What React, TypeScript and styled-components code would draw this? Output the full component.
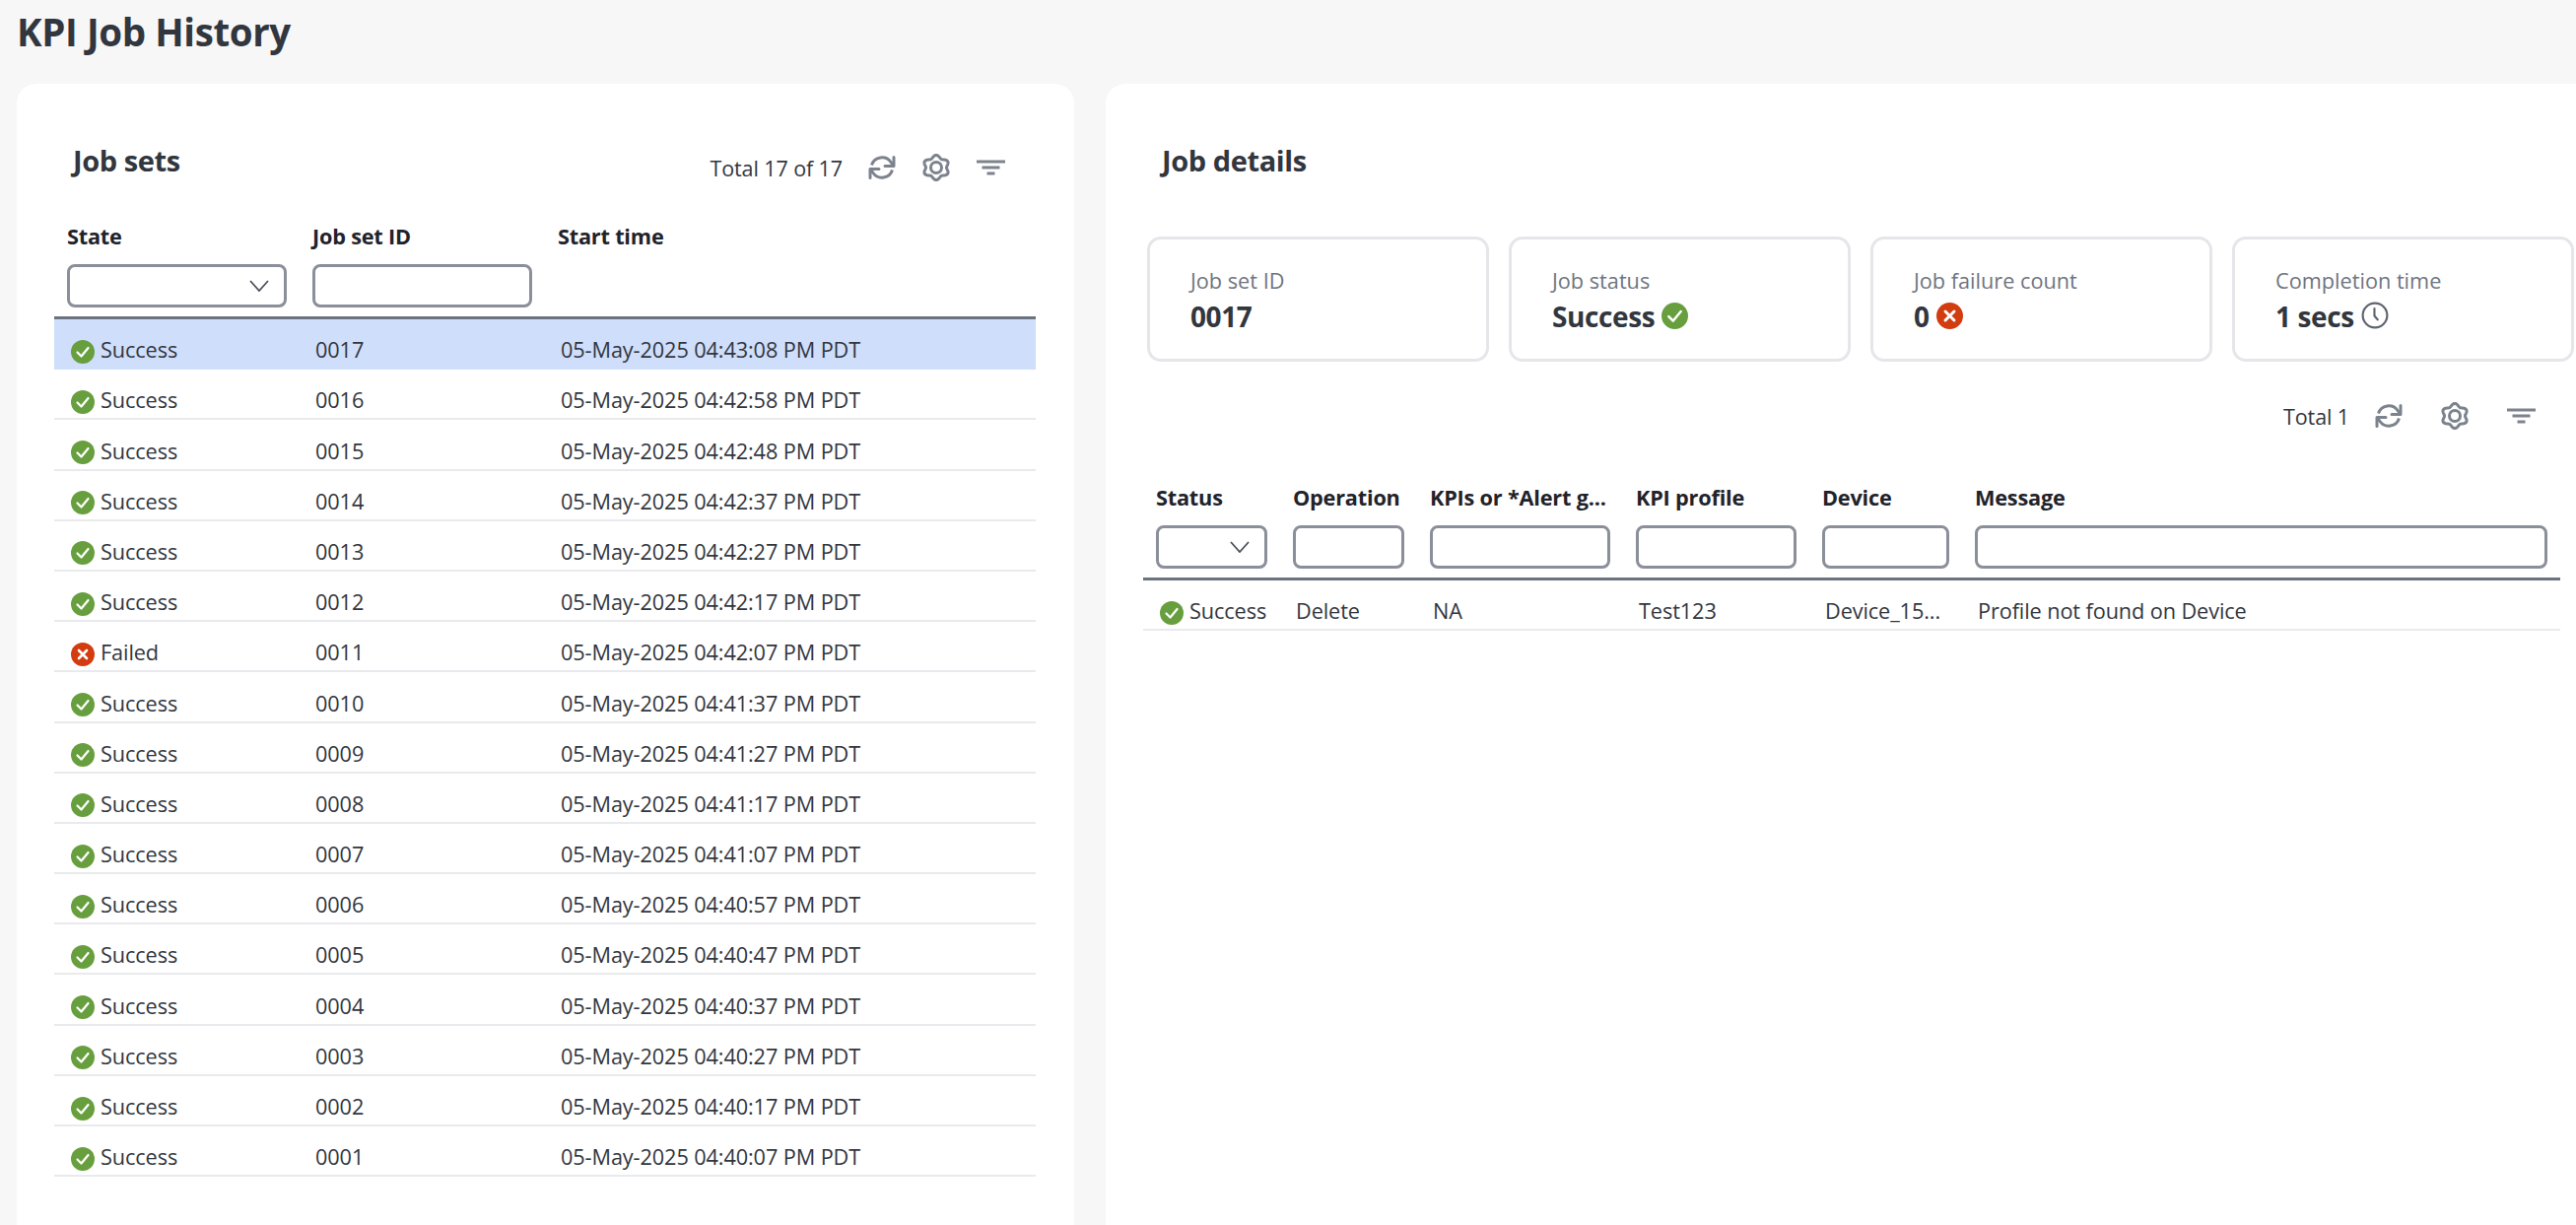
import styled, { createGlobalStyle } from "styled-components";

const GlobalStyle = createGlobalStyle`
  html, body {
    margin: 0;
    height: 100%;
    overflow: hidden;
    background: #f7f7f7;
  }
  body {
    font-family: "Open Sans", "Noto Sans", "Liberation Sans", sans-serif;
    color: #32363e;
  }
`;

const Page = styled.div`
  width: 2614px;
  height: 1243px;
  overflow: hidden;
`;

const PageTitle = styled.h1`
  margin: 0;
  height: 85px;
  padding: 8px 0 0 17px;
  box-sizing: border-box;
  font-size: 38.5px;
  line-height: 48px;
  font-weight: 700;
  letter-spacing: -0.4px;
  color: #32363e;
`;

const Columns = styled.div`
  display: flex;
  gap: 32px;
  padding-left: 17px;
`;

const Panel = styled.section<{ $width: number }>`
  width: ${(p) => p.$width}px;
  height: 1180px;
  flex: none;
  background: #fff;
  border-radius: 20px;
`;

const PanelHead = styled.div<{ $height: number; $right: number }>`
  height: ${(p) => p.$height}px;
  box-sizing: border-box;
  padding: 58px ${(p) => p.$right}px 0 57px;
  display: flex;
  justify-content: space-between;
  align-items: flex-start;
`;

const PanelTitle = styled.h2`
  margin: 0;
  font-size: 29px;
  line-height: 40px;
  font-weight: 700;
  letter-spacing: -0.4px;
  color: #32363e;
`;

const Tools = styled.div`
  display: flex;
  align-items: center;
  gap: 26px;
  height: 40px;
`;

const HeadTools = styled(Tools)`
  margin-top: 7px;
`;

const ToolRow = styled(Tools)`
  justify-content: flex-end;
  width: 1451px;
  margin: 35px 0 50px;
`;

const Total = styled.span`
  font-size: 21.5px;
  line-height: 28px;
  letter-spacing: -0.1px;
  color: #32363e;
  position: relative;
  top: 1px;
`;

const IconGroup = styled.div<{ $gap: number }>`
  display: flex;
  align-items: center;
  gap: ${(p) => p.$gap}px;
  color: #7d838e;
`;

const Grid = styled.table<{ $width: number }>`
  width: ${(p) => p.$width}px;
  margin-left: 38px;
  table-layout: fixed;
  border-collapse: separate;
  border-spacing: 0;
`;

const HeadCell = styled.th`
  padding: 0 13px 0 13px;
  text-align: left;
  font-size: 21.7px;
  line-height: 26px;
  font-weight: 700;
  letter-spacing: -0.2px;
  white-space: nowrap;
  color: #1f232b;
`;

const FilterCell = styled.td`
  padding: 15px 13px 9px 13px;
  height: 44px;
  border-bottom: 3px solid #6b7280;
`;

const FilterInput = styled.input`
  display: block;
  width: 100%;
  height: 44px;
  box-sizing: border-box;
  border: 3px solid #8a8f99;
  border-radius: 8px;
  background: #fff;
  outline: none;
`;

const FilterSelect = styled.div`
  display: flex;
  align-items: center;
  justify-content: flex-end;
  height: 44px;
  box-sizing: border-box;
  padding-right: 15px;
  border: 3px solid #8a8f99;
  border-radius: 8px;
  background: #fff;
  color: #4b5059;
`;

const Row = styled.tr<{ $selected?: boolean }>`
  background: ${(p) => (p.$selected ? "#cfdefb" : "transparent")};
`;

const Cell = styled.td<{ $selected?: boolean }>`
  height: 51.2px;
  box-sizing: border-box;
  padding: 0 10px 4px 16px;
  vertical-align: bottom;
  font-size: 21.7px;
  line-height: 28px;
  letter-spacing: -0.1px;
  white-space: nowrap;
  color: #32363e;
  border-bottom: 2px solid ${(p) => (p.$selected ? "#cfdefb" : "#e9eaed")};
`;

const StatusWrap = styled.span`
  display: flex;
  align-items: center;
  gap: 6px;
  margin-left: 1px;
`;

const Cards = styled.div`
  display: grid;
  grid-template-columns: repeat(4, 347px);
  gap: 20px;
  margin-left: 42px;
`;

const Card = styled.div`
  height: 127px;
  box-sizing: border-box;
  padding: 28px 0 0 41px;
  border: 3px solid #e5e6ea;
  border-radius: 14px;
`;

const CardLabel = styled.div`
  font-size: 21.7px;
  line-height: 28px;
  letter-spacing: 0;
  color: #6f7580;
`;

const Badge = styled.svg`
  flex: none;
  margin-top: 3px;
`;

const CardValue = styled.div`
  display: flex;
  align-items: center;
  gap: 7px;
  margin-top: 3px;
  font-size: 28px;
  line-height: 38px;
  font-weight: 700;
  letter-spacing: -0.4px;
  color: #32363e;

  ${Badge} {
    margin-top: -2px;
  }
`;

const CheckBadge = ({ size = 24 }: { size?: number }) => (
  <Badge width={size} height={size} viewBox="0 0 24 24">
    <circle cx="12" cy="12" r="12" fill="#689f3e" />
    <path d="M6.5 12.5l4 4 7-8.5" fill="none" stroke="#fff" strokeWidth="2.2" strokeLinecap="round" strokeLinejoin="round" />
  </Badge>
);

const CrossBadge = ({ size = 24 }: { size?: number }) => (
  <Badge width={size} height={size} viewBox="0 0 24 24">
    <circle cx="12" cy="12" r="12" fill="#d23c0f" />
    <path d="M8 8l8 8M16 8l-8 8" fill="none" stroke="#fff" strokeWidth="2.6" strokeLinecap="round" />
  </Badge>
);

const ClockIcon = () => (
  <Badge width="28" height="28" viewBox="0 0 26 26" fill="none" stroke="#5f656f" strokeWidth="2">
    <circle cx="13" cy="13" r="11.5" />
    <path d="M12.5 6.5v7l3 3.5" strokeLinecap="round" strokeLinejoin="round" />
  </Badge>
);

const RefreshIcon = () => (
  <svg width="28" height="26" viewBox="0 0 28 26" fill="none" stroke="currentColor" strokeWidth="3" strokeLinejoin="round">
    <path d="M3.5 10.5A11 11 0 0 1 23 7.5l2.5 3" />
    <path d="M26 2.5v9h-9" strokeLinecap="round" />
    <path d="M24.5 15.5A11 11 0 0 1 5 18.5l-2.5-3" />
    <path d="M2 23.5v-9h9" strokeLinecap="round" />
  </svg>
);

// six lobed outline of the settings wheel
const gearPath = () => {
  const pts: string[] = [];
  for (let i = 0; i < 120; i++) {
    const a = (i / 120) * Math.PI * 2;
    const r = 12 + 1.5 * Math.cos(6 * a);
    pts.push(`${(15 + r * Math.sin(a)).toFixed(2)} ${(14 - r * 0.93 * Math.cos(a)).toFixed(2)}`);
  }
  return `M${pts.join("L")}Z`;
};

const GearIcon = () => (
  <svg width="30" height="28" viewBox="0 0 30 28" fill="none" stroke="currentColor" strokeWidth="3">
    <path d={gearPath()} strokeLinejoin="round" />
    <circle cx="15" cy="14" r="5.5" />
  </svg>
);

const FilterIcon = () => (
  <svg width="29" height="16" viewBox="0 0 29 16" fill="none" stroke="currentColor" strokeWidth="3">
    <path d="M0 2h29M5.5 8h18M10.5 14h8" />
  </svg>
);

const Chevron = () => (
  <svg width="20" height="12" viewBox="0 0 20 12" fill="none" stroke="currentColor" strokeWidth="1.8">
    <path d="M1 1l9 10 9-10" />
  </svg>
);

const TableTools = ({ label, gap }: { label: string; gap: number }) => (
  <>
    <Total>{label}</Total>
    <IconGroup $gap={gap}>
      <RefreshIcon />
      <GearIcon />
      <FilterIcon />
    </IconGroup>
  </>
);

const Status = ({ ok }: { ok: boolean }) => (
  <StatusWrap>
    {ok ? <CheckBadge /> : <CrossBadge />}
    {ok ? "Success" : "Failed"}
  </StatusWrap>
);

const jobSets = [
  ["0017", "05-May-2025 04:43:08 PM PDT"],
  ["0016", "05-May-2025 04:42:58 PM PDT"],
  ["0015", "05-May-2025 04:42:48 PM PDT"],
  ["0014", "05-May-2025 04:42:37 PM PDT"],
  ["0013", "05-May-2025 04:42:27 PM PDT"],
  ["0012", "05-May-2025 04:42:17 PM PDT"],
  ["0011", "05-May-2025 04:42:07 PM PDT"],
  ["0010", "05-May-2025 04:41:37 PM PDT"],
  ["0009", "05-May-2025 04:41:27 PM PDT"],
  ["0008", "05-May-2025 04:41:17 PM PDT"],
  ["0007", "05-May-2025 04:41:07 PM PDT"],
  ["0006", "05-May-2025 04:40:57 PM PDT"],
  ["0005", "05-May-2025 04:40:47 PM PDT"],
  ["0004", "05-May-2025 04:40:37 PM PDT"],
  ["0003", "05-May-2025 04:40:27 PM PDT"],
  ["0002", "05-May-2025 04:40:17 PM PDT"],
  ["0001", "05-May-2025 04:40:07 PM PDT"],
];

const jobSetColumns = [
  { title: "State", width: 249, filter: "select" },
  { title: "Job set ID", width: 249, filter: "input" },
  { title: "Start time", width: 498 },
];

const detailColumns = [
  { title: "Status", width: 139, filter: "select" },
  { title: "Operation", width: 139, filter: "input" },
  { title: "KPIs or *Alert g...", width: 209, filter: "input" },
  { title: "KPI profile", width: 189, filter: "input" },
  { title: "Device", width: 155, filter: "input" },
  { title: "Message", width: 607, filter: "input" },
];

type Column = { title: string; width: number; filter?: string };

const GridHead = ({ columns }: { columns: Column[] }) => (
  <>
    <colgroup>
      {columns.map((c) => (
        <col key={c.title} width={c.width} />
      ))}
    </colgroup>
    <thead>
      <tr>
        {columns.map((c) => (
          <HeadCell key={c.title}>{c.title}</HeadCell>
        ))}
      </tr>
      <tr>
        {columns.map((c) => (
          <FilterCell key={c.title}>
            {c.filter === "select" && (
              <FilterSelect>
                <Chevron />
              </FilterSelect>
            )}
            {c.filter === "input" && <FilterInput />}
          </FilterCell>
        ))}
      </tr>
    </thead>
  </>
);

export default function App() {
  return (
    <Page>
      <GlobalStyle />
      <PageTitle>KPI Job History</PageTitle>
      <Columns>
        <Panel $width={1073}>
          <PanelHead $height={142} $right={70}>
            <PanelTitle>Job sets</PanelTitle>
            <HeadTools>
              <TableTools label="Total 17 of 17" gap={26} />
            </HeadTools>
          </PanelHead>
          <Grid $width={996}>
            <GridHead columns={jobSetColumns} />
            <tbody>
              {jobSets.map(([id, time], i) => (
                <Row key={id} $selected={i === 0}>
                  <Cell $selected={i === 0}>
                    <Status ok={id !== "0011"} />
                  </Cell>
                  <Cell $selected={i === 0}>{id}</Cell>
                  <Cell $selected={i === 0}>{time}</Cell>
                </Row>
              ))}
            </tbody>
          </Grid>
        </Panel>

        <Panel $width={1530}>
          <PanelHead $height={155} $right={54}>
            <PanelTitle>Job details</PanelTitle>
          </PanelHead>
          <Cards>
            <Card>
              <CardLabel>Job set ID</CardLabel>
              <CardValue>0017</CardValue>
            </Card>
            <Card>
              <CardLabel>Job status</CardLabel>
              <CardValue>
                Success <CheckBadge size={27} />
              </CardValue>
            </Card>
            <Card>
              <CardLabel>Job failure count</CardLabel>
              <CardValue>
                0 <CrossBadge size={27} />
              </CardValue>
            </Card>
            <Card>
              <CardLabel>Completion time</CardLabel>
              <CardValue>
                1 secs <ClockIcon />
              </CardValue>
            </Card>
          </Cards>
          <ToolRow>
            <TableTools label="Total 1" gap={38} />
          </ToolRow>
          <Grid $width={1438}>
            <GridHead columns={detailColumns} />
            <tbody>
              <Row>
                <Cell>
                  <Status ok />
                </Cell>
                <Cell>Delete</Cell>
                <Cell>NA</Cell>
                <Cell>Test123</Cell>
                <Cell>Device_15...</Cell>
                <Cell>Profile not found on Device</Cell>
              </Row>
            </tbody>
          </Grid>
        </Panel>
      </Columns>
    </Page>
  );
}
